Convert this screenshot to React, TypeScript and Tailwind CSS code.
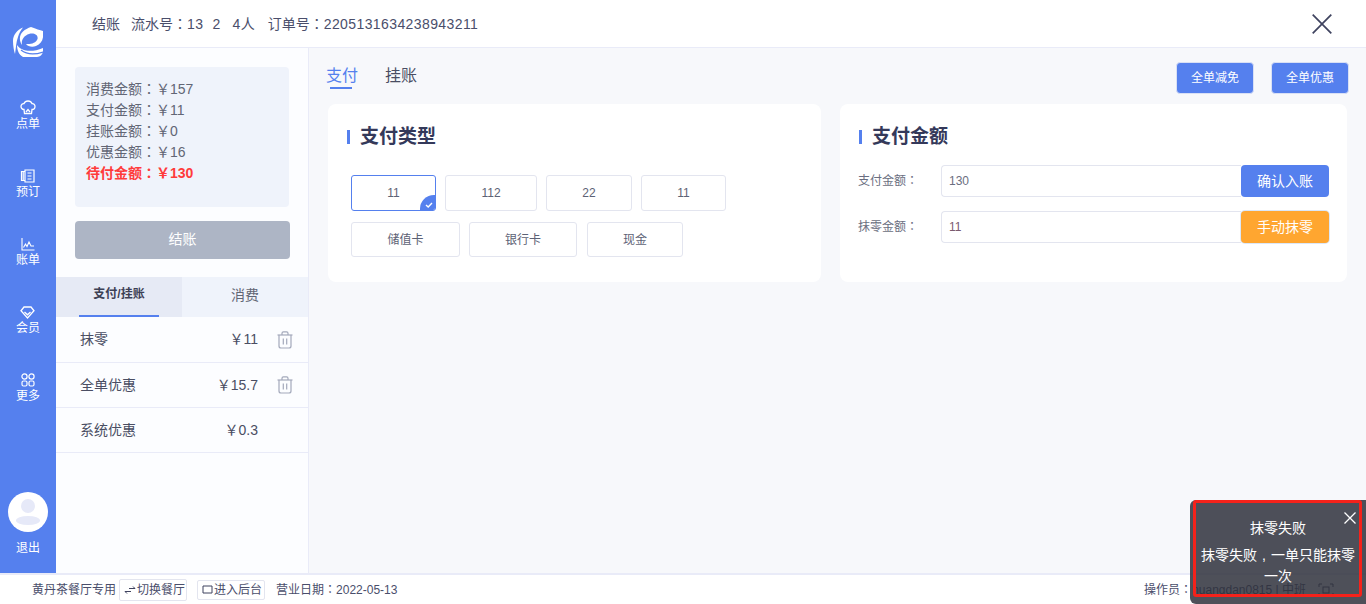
import React from "react";

const font = { fontFamily: '"Liberation Sans","Noto Sans CJK SC",sans-serif' };

function C() {
  return <span className="font-['Noto_Sans_CJK_KR'] leading-none">：</span>;
}

function Logo() {
  return (
    <svg width="30" height="31" viewBox="0 0 30 31" fill="#fff">
      <path d="M10 1.5C4 4 0 9 0 15C0 20 1 25 2 28C3 22 3 16 5 11C6 7 8 4 10 1.5Z" />
      <path d="M18 1C23 3 27 4 30 5C31 12 29 18 23 20C19 21.5 15 20.5 13 18C18 18.5 23 17 24.5 13C25.5 9 21 6.5 16 8C11 9.5 8 14 9 19C6 15 6 9 10 5.5C12 3.5 15 2 18 1Z" />
      <path d="M4 19C8 25 18 27 30 22V25C30 28 27 31 24 31H10C6 29 4 24 4 19Z" />
      <path d="M8 24C13 28 21 29 30 26" fill="none" stroke="#5580ee" strokeWidth="1.3" />
    </svg>
  );
}

function ChefIcon() {
  return (
    <svg width="16" height="15" viewBox="0 0 16 15" fill="none" stroke="#fff" strokeWidth="1.3">
      <path d="M4 9.5C2 9.5 1 8 1 6.2C1 4.5 2.5 3.3 4 3.6C4.6 2 6.2 1 8 1C9.8 1 11.4 2 12 3.6C13.5 3.3 15 4.5 15 6.2C15 8 14 9.5 12 9.5L11.5 13.5H4.5Z" />
      <path d="M6 12L8 9.5L10 12" />
    </svg>
  );
}

function BookIcon() {
  return (
    <svg width="15" height="14" viewBox="0 0 15 14" fill="none" stroke="#fff" strokeWidth="1.2">
      <path d="M5 1H14V13H5Z" />
      <path d="M5 2.5H1.5V11.5H5" />
      <path d="M3.2 2.5V11.5" />
      <path d="M7.5 4H11.5M7.5 7H11.5M7.5 10H11.5" />
    </svg>
  );
}

function ChartIcon() {
  return (
    <svg width="14" height="14" viewBox="0 0 14 14" fill="none" stroke="#fff" strokeWidth="1.1">
      <path d="M1 1V13H13.5" />
      <path d="M2.5 10.5L4.5 7L6 9.5L8 5L10 9L13 9" />
    </svg>
  );
}

function GemIcon() {
  return (
    <svg width="15" height="13" viewBox="0 0 15 13" fill="none" stroke="#fff" strokeWidth="1.3">
      <path d="M4 1H11L14 4.8L7.5 12L1 4.8Z" />
      <path d="M4.5 6L7.5 8.8L10.5 6" />
    </svg>
  );
}

function GridIcon() {
  return (
    <svg width="14" height="14" viewBox="0 0 14 14" fill="none" stroke="#fff" strokeWidth="1.2">
      <circle cx="3.5" cy="3.5" r="2.6" />
      <circle cx="10.5" cy="3.5" r="2.6" />
      <rect x="1" y="8" width="5" height="5" rx="1.5" />
      <rect x="8" y="8" width="5" height="5" rx="1.5" />
    </svg>
  );
}

function Trash() {
  return (
    <svg width="16" height="18" viewBox="0 0 16 18" fill="none" stroke="#a3a9bb" strokeWidth="1.2">
      <path d="M0.5 4H15.5" />
      <path d="M5 4V2.2C5 1.3 5.7 0.8 6.4 0.8H9.6C10.3 0.8 11 1.3 11 2.2V4" />
      <path d="M2 4V15C2 16.2 2.8 17 4 17H12C13.2 17 14 16.2 14 15V4" />
      <path d="M6.3 7.5V13.5M9.7 7.5V13.5" />
    </svg>
  );
}

function NavItem({ icon, label }: { icon: React.ReactNode; label: string }) {
  return (
    <div className="flex h-[42px] flex-col items-center text-[12px] leading-[16px] text-white">
      <div className="flex h-[18px] items-end justify-center">{icon}</div>
      <div className="mt-[1px]">{label}</div>
    </div>
  );
}

function Pay({ w, children, active }: { w: string; children: React.ReactNode; active?: boolean }) {
  return (
    <div
      className={`relative flex items-center justify-center overflow-hidden rounded-[3px] border bg-white text-[12px] text-[#5d6275] ${w} ${
        active ? "border-[#5580ee]" : "border-[#e3e5ef]"
      }`}
    >
      {children}
      {active && (
        <div className="absolute -bottom-[1px] -right-[1px] h-[16px] w-[16px] rounded-tl-[14px] bg-[#5580ee]">
          <svg className="absolute bottom-[2px] right-[2px]" width="10" height="8" viewBox="0 0 10 8" fill="none" stroke="#fff" strokeWidth="1.4">
            <path d="M2 4L4.2 6L8 2" />
          </svg>
        </div>
      )}
    </div>
  );
}

function SectionTitle({ children }: { children: React.ReactNode }) {
  return (
    <div className="flex items-center text-[19px] font-bold leading-[24px] text-[#34395a]">
      <span className="mr-[10px] h-[14px] w-[3px] bg-[#5580ee]" />
      {children}
    </div>
  );
}

function Row({ name, amount, trash, h }: { name: string; amount: string; trash?: boolean; h: string }) {
  return (
    <div className={`flex items-center border-b border-[#e9ebf8] pl-[24px] text-[14px] text-[#4a4e63] ${h}`}>
      <span className="w-[120px] shrink-0">{name}</span>
      <span className="w-[58px] shrink-0 text-right">{amount}</span>
      {trash && (
        <span className="ml-[19px] shrink-0">
          <Trash />
        </span>
      )}
    </div>
  );
}

function Amount({ label, value, btn, btnClass, valueClass }: { label: string; value: string; btn: string; btnClass: string; valueClass: string }) {
  return (
    <div className="-ml-[1px] flex h-[32px] items-center">
      <span className="w-[83px] text-[12px] text-[#6a6e80]">
        {label}
        <C />
      </span>
      <div className={`flex h-[32px] w-[300px] items-center rounded-l-[4px] border border-r-0 border-[#e3e5ef] pl-[7px] text-[12px] ${valueClass}`}>{value}</div>
      <div className={`flex h-[32px] w-[88px] items-center justify-center rounded-[4px] text-[14px] text-white ${btnClass}`}>{btn}</div>
    </div>
  );
}

export default function App() {
  return (
    <div className="relative h-[604px] w-[1366px] overflow-hidden bg-white" style={font}>
      <div className="flex h-[575px] border-b-2 border-[#e9ebf8]">
        <aside className="flex w-[56px] shrink-0 flex-col items-center bg-[#5580ee]">
          <div className="mt-[26px]">
            <Logo />
          </div>
          <div className="mt-[40px] flex flex-col gap-[26px]">
            <NavItem icon={<ChefIcon />} label="点单" />
            <NavItem icon={<BookIcon />} label="预订" />
            <NavItem icon={<ChartIcon />} label="账单" />
            <NavItem icon={<GemIcon />} label="会员" />
            <NavItem icon={<GridIcon />} label="更多" />
          </div>
          <div className="mt-auto mb-[17px] flex flex-col items-center">
            <div className="relative h-[40px] w-[40px] overflow-hidden rounded-full bg-white">
              <div className="absolute left-[13px] top-[7px] h-[14px] w-[14px] rounded-full bg-[#e6e9f8]" />
              <div className="absolute left-[8px] top-[24px] h-[9px] w-[24px] rounded-[50%] bg-[#e6e9f8]" />
            </div>
            <div className="mt-[8px] text-[12px] leading-[16px] text-white">退出</div>
          </div>
        </aside>
        <div className="flex min-w-0 flex-1 flex-col">
          <header className="flex h-[48px] shrink-0 items-center border-b border-[#e9ebf8] pl-[36px] pr-[34px] pt-[1px] text-[14px] text-[#4a4e6b]">
            <span>结账</span>
            <span className="ml-[11px]">
              流水号
              <C />
              <span className="tracking-[0.4px]">13</span>
            </span>
            <span className="ml-[9px] tracking-[0.4px]">2</span>
            <span className="ml-[12px]">
              <span className="tracking-[0.4px]">4</span>人
            </span>
            <span className="ml-[13px]">
              订单号
              <C />
              <span className="tracking-[0.4px]">2205131634238943211</span>
            </span>
            <svg className="ml-auto" width="20" height="20" viewBox="0 0 20 20" fill="none" stroke="#3f435f" strokeWidth="1.7">
              <path d="M0.7 0.7L19.3 19.3M19.3 0.7L0.7 19.3" />
            </svg>
          </header>
          <div className="flex min-h-0 flex-1">
            <section className="flex w-[253px] shrink-0 flex-col border-r border-[#e9ebf8] bg-[#fcfdff]">
              <div className="mx-[19px] mt-[19px] h-[140px] rounded-[4px] bg-[#eff3fb] pl-[11px] pt-[12px] text-[14px] leading-[21px] text-[#626675]">
                <div>消费金额<C />￥157</div>
                <div>支付金额<C />￥11</div>
                <div>挂账金额<C />￥0</div>
                <div>优惠金额<C />￥16</div>
                <div className="font-bold text-[#ff3b3b]">待付金额<C />￥130</div>
              </div>
              <div className="mx-[19px] mt-[14px] flex h-[38px] w-[215px] items-center justify-center rounded-[4px] bg-[#adb5c5] pb-[2px] text-[14px] text-white">结账</div>
              <div className="mt-[18px] flex h-[40px] bg-[#eff3fb] text-[14px]">
                <div className="relative flex h-[40px] w-[126px] items-center justify-center bg-[#e6eaf5] pb-[6px] text-[12px] font-bold text-[#3d4155]">
                  支付/挂账
                  <span className="absolute bottom-0 left-[23px] h-[2px] w-[80px] bg-[#5580ee]" />
                </div>
                <div className="flex flex-1 items-center justify-center pb-[4px] text-[#626675]">消费</div>
              </div>
              <Row h="h-[46px]" name="抹零" amount="￥11" trash />
              <Row h="h-[45px]" name="全单优惠" amount="￥15.7" trash />
              <Row h="h-[45px]" name="系统优惠" amount="￥0.3" />
            </section>
            <main className="min-w-0 flex-1 bg-[#f7f8fb] px-[19px]">
              <div className="flex h-[56px] items-start justify-between">
                <div className="mt-[16px] flex gap-[27px] text-[16px] leading-[24px]">
                  <div className="relative -ml-[2px] text-[#5580ee]">
                    支付
                    <span className="absolute left-[4px] top-[23px] h-[2px] w-[22px] bg-[#5580ee]" />
                  </div>
                  <div className="text-[#4a4e63]">挂账</div>
                </div>
                <div className="-mr-[2px] mt-[14px] flex gap-[17px]">
                  <div className="flex h-[32px] w-[78px] items-center justify-center rounded-[4px] border border-[#d9e0f5] bg-[#5580ee] text-[12px] text-white">全单减免</div>
                  <div className="flex h-[32px] w-[78px] items-center justify-center rounded-[4px] border border-[#d9e0f5] bg-[#5580ee] text-[12px] text-white">全单优惠</div>
                </div>
              </div>
              <div className="flex gap-[19px]">
                <div className="h-[178px] w-[493px] rounded-[8px] bg-white pl-[19px] pt-[21px]">
                  <SectionTitle>支付类型</SectionTitle>
                  <div className="ml-[4px] mt-[26px] flex h-[36px] gap-[9px]">
                    <Pay w="w-[85px]" active>11</Pay>
                    <Pay w="w-[92px]">112</Pay>
                    <Pay w="w-[86px]">22</Pay>
                    <Pay w="w-[85px]">11</Pay>
                  </div>
                  <div className="ml-[4px] mt-[11px] flex h-[35px]">
                    <Pay w="w-[109px]">储值卡</Pay>
                    <Pay w="ml-[9px] w-[108px]">银行卡</Pay>
                    <Pay w="ml-[10px] w-[96px]">现金</Pay>
                  </div>
                </div>
                <div className="h-[178px] w-[507px] rounded-[8px] bg-white pl-[19px] pt-[21px]">
                  <SectionTitle>支付金额</SectionTitle>
                  <div className="mt-[16px] flex flex-col gap-[14px]">
                    <Amount label="支付金额" value="130" btn="确认入账" btnClass="bg-[#5580ee]" valueClass="text-[#6a6e80]" />
                    <Amount label="抹零金额" value="11" btn="手动抹零" btnClass="bg-[#ffa630] ring-1 ring-[#dbe7f8]" valueClass="text-[#7a5a70]" />
                  </div>
                </div>
              </div>
            </main>
          </div>
        </div>
      </div>
      <footer className="flex h-[29px] items-center pl-[32px] pr-[32px] text-[12px] text-[#4a4e6b]">
        <span>黄丹茶餐厅专用</span>
        <span className="ml-[3px] flex h-[22px] items-center rounded-[2px] border border-[#e3e5ef] pl-[4px] pr-[1px]">
          <svg className="mr-[1px]" width="12" height="8" viewBox="0 0 12 8" fill="none" stroke="#3f435f" strokeWidth="1">
            <path d="M1 5.5H7M1 5.5L3 7.5M11 2.5H5M11 2.5L9 0.5" />
          </svg>
          切换餐厅
        </span>
        <span className="ml-[10px] flex h-[20px] items-center rounded-[2px] border border-[#e3e5ef] pl-[4px] pr-[2px]">
          <svg className="mr-[1px]" width="11" height="10" viewBox="0 0 11 10" fill="none" stroke="#3f435f" strokeWidth="1">
            <path d="M1 1H10V8H1Z" />
          </svg>
          进入后台
        </span>
        <span className="ml-[11px]">营业日期<C />2022-05-13</span>
        <span className="ml-auto">操作员<C />huangdan0815 | 中班</span>
        <svg className="ml-[12px]" width="16" height="14" viewBox="0 0 16 14" fill="none" stroke="#3f435f" strokeWidth="1">
          <path d="M1 4V1H4M12 1H15V4M15 10V13H12M4 13H1V10" />
          <rect x="5" y="4" width="6" height="6" />
        </svg>
      </footer>
      <div className="absolute bottom-0 right-0 h-[104px] w-[176px] rounded-l-[6px] bg-[#2f313c]/85 px-[8px] pt-[18px] text-center text-[14px] text-white">
        <div className="absolute left-[3px] top-0 h-[97px] w-[169px] rounded-[3px] border-[3px] border-[#f5221b]" />
        <svg className="absolute right-[10px] top-[12px]" width="12" height="12" viewBox="0 0 12 12" fill="none" stroke="#fff" strokeWidth="1.3">
          <path d="M0.5 0.5L11.5 11.5M11.5 0.5L0.5 11.5" />
        </svg>
        <div className="leading-[20px]">抹零失败</div>
        <div className="mt-[7px] leading-[21px]">
          抹零失败<span className="inline-block w-[14px] text-center">,</span>一单只能抹零一次
        </div>
      </div>
    </div>
  );
}
